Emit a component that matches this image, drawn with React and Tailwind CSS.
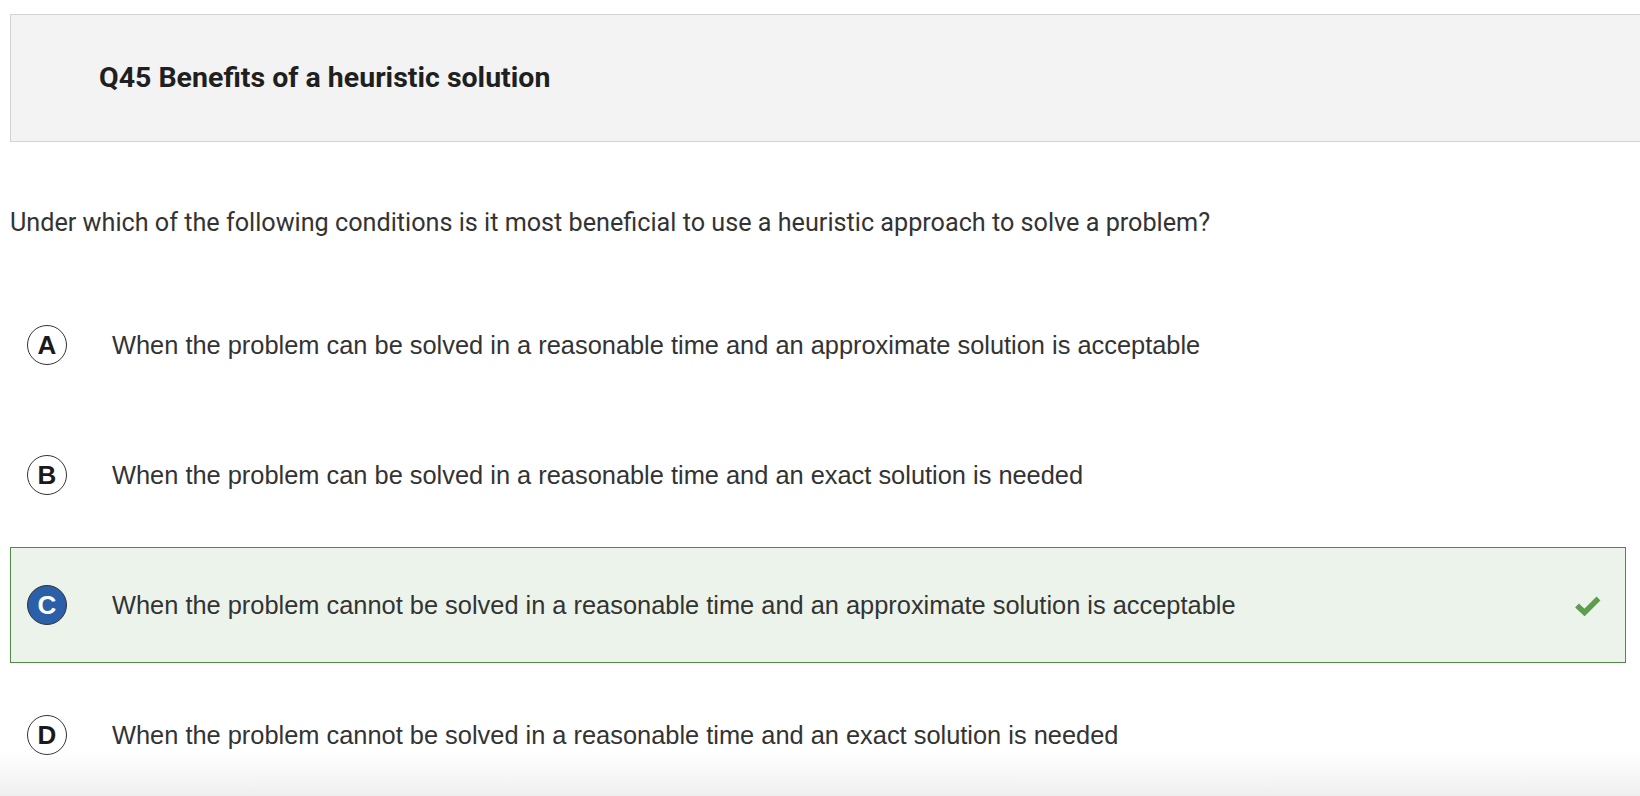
import React from "react";

const options = [
  { key: "A", text: "When the problem can be solved in a reasonable time and an approximate solution is acceptable" },
  { key: "B", text: "When the problem can be solved in a reasonable time and an exact solution is needed" },
  { key: "C", text: "When the problem cannot be solved in a reasonable time and an approximate solution is acceptable", correct: true },
  { key: "D", text: "When the problem cannot be solved in a reasonable time and an exact solution is needed" },
];

const OptionRow = ({ opt }) => {
  return (
    <div
      className={
        "flex items-center h-[116px] pl-[16px] pr-[24px] border " +
        (opt.correct ? "bg-[#ebf3ea] border-[#4f8a45]" : "border-transparent")
      }
    >
      <div
        className={
          "w-[40px] h-[40px] rounded-full flex items-center justify-center shrink-0 text-[26px] font-bold " +
          (opt.correct
            ? "bg-[#2b5fa8] text-white border border-[#333]"
            : "bg-white text-[#1a1a1a] border border-[#333]")
        }
        style={{ fontFamily: '"Liberation Sans", Arial, sans-serif' }}
      >
        {opt.key}
      </div>
      <div
        className="ml-[45px] text-[25.4px] text-[#333] flex-1"
        style={{ fontFamily: '"Liberation Sans", Arial, sans-serif' }}
      >
        {opt.text}
      </div>
      {opt.correct && (
        <svg width="26" height="21" viewBox="0 0 26 21" className="shrink-0">
          <path d="M2 10.5 L9.5 17.5 L23.5 3.5" fill="none" stroke="#5c9e4c" strokeWidth="5.5" strokeLinecap="butt" />
        </svg>
      )}
    </div>
  );
};

export default function App() {
  return (
    <div className="relative min-h-[796px] bg-white pt-[14px] pl-[10px] pr-[14px] overflow-hidden" style={{ fontFamily: "Roboto, sans-serif" }}>
      {/* title bar */}
      <div className="h-[128px] mr-[-14px] bg-[#f3f3f3] border-l border-t border-b border-[#d4d4d4] flex items-center pl-[88px]">
        <h1 className="text-[28.5px] font-bold text-[#1f1f1f]">Q45 Benefits of a heuristic solution</h1>
      </div>

      <p className="mt-[66px] text-[25.2px] leading-[30px] text-[#333]">
        Under which of the following conditions is it most beneficial to use a heuristic approach to solve a problem?
      </p>

      <div className="mt-[49px] flex flex-col gap-[14px]">
        {options.map((o) => (
          <OptionRow key={o.key} opt={o} />
        ))}
      </div>

      {/* bottom fade */}
      <div className="absolute left-0 right-0 bottom-0 h-[44px] bg-gradient-to-b from-transparent to-[#efefef] pointer-events-none" />
    </div>
  );
}
